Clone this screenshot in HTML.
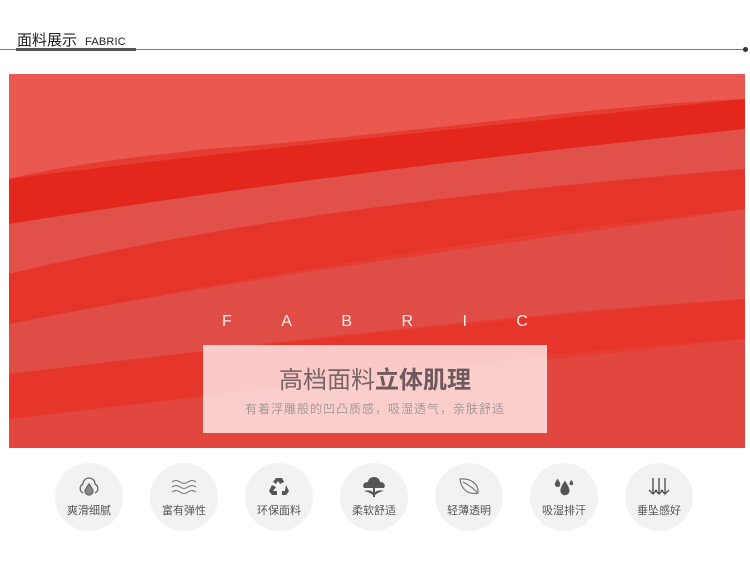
<!DOCTYPE html>
<html><head><meta charset="utf-8"><style>
body{margin:0;width:750px;height:570px;background:#fff;position:relative;overflow:hidden;font-family:"Liberation Sans","Noto Sans CJK SC",sans-serif}
.t{position:absolute;left:17px;top:32px;font-size:15px;color:#222;white-space:nowrap;line-height:18px}
.t span{font-size:11px;margin-left:8px;letter-spacing:.2px}
.ln{position:absolute;left:0;top:49px;width:746px;height:1px;background:#777}
.ul{position:absolute;left:16px;top:48px;width:120px;height:3px;background:#555}
.dot{position:absolute;left:743px;top:47px;width:5px;height:5px;border-radius:50%;background:#333}
.img{position:absolute;left:9px;top:74px;width:736px;height:374px}
.fab{position:absolute;top:313px;left:222px;width:306px;display:flex;justify-content:space-between;color:#fff;font-size:16px;opacity:.9}
.box{position:absolute;left:203px;top:345px;width:344px;height:88px;background:rgba(255,240,240,.8);text-align:center}
.box .a{margin-top:15px;font-size:24px;color:#7a6466}
.box .a b{color:#6e5a5b}
.box .b{margin-top:5px;font-size:12px;color:#a89899;letter-spacing:1px}
.c{position:absolute;top:463px;width:68px;height:68px;border-radius:50%;background:#f2f2f2;text-align:center;font-size:11px;color:#555}
.c svg{display:block;margin:13px auto 4px}
</style></head><body>
<div class="t">面料展示<span>FABRIC</span></div>
<div class="ln"></div><div class="ul"></div><div class="dot"></div>
<svg class="img" viewBox="0 0 736 374" preserveAspectRatio="none">
<rect width="736" height="374" fill="#e63c32"/>
<path d="M0 0H736V25C600 30 400 60 200 75 100 85 40 95 0 105Z" fill="#eb584f"/>
<path d="M0 105C150 85 400 60 736 25V55C550 80 350 100 0 150Z" fill="#e4271d"/>
<path d="M0 150C250 110 500 80 736 55V95C500 115 250 140 0 200Z" fill="#e2504a"/>
<path d="M0 200C250 140 500 115 736 95V135C500 160 250 200 0 250Z" fill="#e6342a"/>
<path d="M0 250C250 200 500 170 736 135V225C500 240 250 270 0 300Z" fill="#e04c46"/>
<path d="M0 300C250 270 500 245 736 225V265C500 280 300 310 0 345Z" fill="#e6352b"/>
<path d="M0 345C300 310 500 290 736 265V374H0Z" fill="#e1463f"/>
</svg>
<div class="fab"><span>F</span><span>A</span><span>B</span><span>R</span><span>I</span><span>C</span></div>
<div class="box"><div class="a">高档面料<b>立体肌理</b></div><div class="b">有着浮雕般的凹凸质感，吸湿透气，亲肤舒适</div></div>

<div class="c" style="left:55px"><svg width="24" height="22" viewBox="0 0 24 22" fill="none" stroke="#666" stroke-width="1.3"><path d="M6 17A5 5 0 0 1 6 8 6 6 0 0 1 18 8 5 5 0 0 1 18 17"/><path d="M12 8C9 12 8 14 8 15A4 4 0 0 0 16 15C16 14 15 12 12 8Z" fill="#888"/></svg>爽滑细腻</div>
<div class="c" style="left:150px"><svg width="28" height="22" viewBox="0 0 28 22" fill="none" stroke="#888" stroke-width="1.3"><path d="M2 6Q6 3 10 6T18 6T26 6M2 11Q6 8 10 11T18 11T26 11M2 16Q6 13 10 16T18 16T26 16"/></svg>富有弹性</div>
<div class="c" style="left:245px"><svg width="24" height="22" viewBox="0 0 24 22" fill="#555"><path d="M9 2L15 2 17 6 13 8 11 5 9 8 6 6Z"/><path d="M19 9L22 15 19 19 15 19 15 15 18 15Z"/><path d="M2 15L5 9 9 11 6 15 10 15 10 19 5 19Z"/></svg>环保面料</div>
<div class="c" style="left:340px"><svg width="26" height="22" viewBox="0 0 26 22" fill="#555"><path d="M13 1C9 1 7 4 7 6 3 6 1 9 3 12H23C25 9 23 6 19 6 19 4 17 1 13 1Z"/><path d="M12 12H14V21H12Z"/><path d="M3 15Q9 13 13 17Q17 13 23 15Q17 16 13 20Q9 16 3 15Z"/></svg>柔软舒适</div>
<div class="c" style="left:435px"><svg width="24" height="22" viewBox="0 0 24 22" fill="none" stroke="#777" stroke-width="1.2"><path d="M3 3C14 2 22 8 21 17C12 19 4 14 3 3Z"/><path d="M6 6Q14 10 21 17"/></svg>轻薄透明</div>
<div class="c" style="left:530px"><svg width="26" height="22" viewBox="0 0 26 24" fill="#555"><path d="M14 5C10 11 9 14 9 16A5 5 0 0 0 19 16C19 14 18 11 14 5Z"/><path d="M6 3C4 6 3 8 3 9A3 3 0 0 0 9 9C9 8 8 6 6 3Z"/><path d="M21 4C20 6 19 7 19 8A2 2 0 0 0 23 8C23 7 22 6 21 4Z"/></svg>吸湿排汗</div>
<div class="c" style="left:625px"><svg width="24" height="22" viewBox="0 0 24 22" fill="none" stroke="#555" stroke-width="1.4"><path d="M6 2V18M2 14L6 18 10 14M12 2V18M8 14L12 18 16 14M18 2V18M14 14L18 18 22 14"/></svg>垂坠感好</div>
</body></html>
